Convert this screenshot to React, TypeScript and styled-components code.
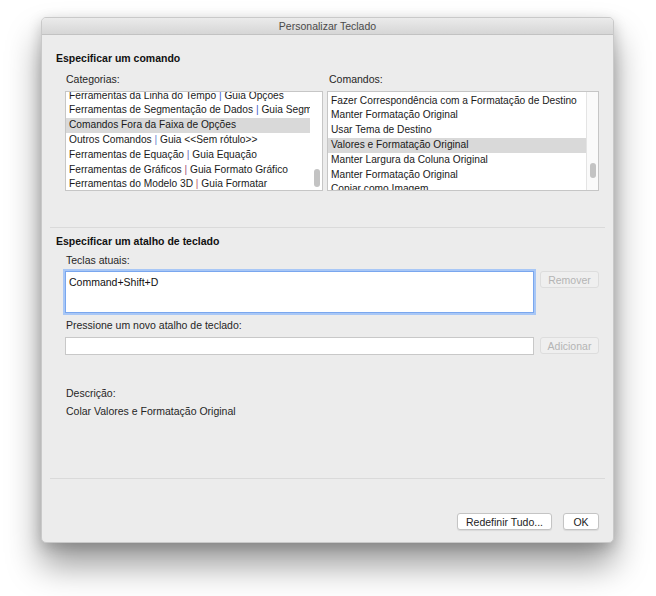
import * as React from 'react';
import styled, { createGlobalStyle } from 'styled-components';

const GlobalStyle = createGlobalStyle`
  html, body {
    margin: 0;
    padding: 0;
    background: #ffffff;
  }
  body {
    font-family: "Liberation Sans", Arial, Helvetica, sans-serif;
    font-size: 10.5px;
    color: #1f1f1f;
  }
`;

type Row = { name: string; guide?: string; pipe?: string; selected?: boolean };

const categorias: Row[] = [
    { name: 'Ferramentas da Linha do Tempo', guide: 'Guia Opções', pipe: '#3f5fc8' },
    { name: 'Ferramentas de Segmentação de Dados', guide: 'Guia Segmentação', pipe: '#3f5fc8' },
    { name: 'Comandos Fora da Faixa de Opções', selected: true },
    { name: 'Outros Comandos', guide: 'Guia <<Sem rótulo>>', pipe: '#6a7fd0' },
    { name: 'Ferramentas de Equação', guide: 'Guia Equação', pipe: '#6a6fb8' },
    { name: 'Ferramentas de Gráficos', guide: 'Guia Formato Gráfico', pipe: '#a0507a' },
    { name: 'Ferramentas do Modelo 3D', guide: 'Guia Formatar', pipe: '#c05a6a' },
];

const comandos: Row[] = [
    { name: 'Fazer Correspondência com a Formatação de Destino' },
    { name: 'Manter Formatação Original' },
    { name: 'Usar Tema de Destino' },
    { name: 'Valores e Formatação Original', selected: true },
    { name: 'Manter Largura da Coluna Original' },
    { name: 'Manter Formatação Original' },
    { name: 'Copiar como Imagem' },
];

class App extends React.Component {
    renderList(rows: Row[], offset: number, thumbTop: number, thumbHeight: number, bordered: boolean) {
        return <ListBox>
            <Rows $offset={offset}>
                {rows.map((r, i) => (
                    <ListRow key={i} $selected={!!r.selected}>
                        {r.name}
                        {r.guide && <> <Pipe $color={r.pipe || '#3f5fc8'}>|</Pipe> {r.guide}</>}
                    </ListRow>
                ))}
            </Rows>
            <Track $bordered={bordered}>
                <Thumb $top={thumbTop} $height={thumbHeight} />
            </Track>
        </ListBox>;
    }

    render() {
        return <Page>
            <GlobalStyle />
            <Window>
                <TitleBar>Personalizar Teclado</TitleBar>
                <Body>
                    <Heading $top={16}>Especificar um comando</Heading>
                    <Indent>
                        <ListsGrid>
                            <div>
                                <FieldLabel $top={7} $left={1}>Categorias:</FieldLabel>
                                {this.renderList(categorias, -3.4, 77, 18, false)}
                            </div>
                            <div>
                                <FieldLabel $top={7} $left={2}>Comandos:</FieldLabel>
                                {this.renderList(comandos, 1.6, 71, 15, true)}
                            </div>
                        </ListsGrid>
                    </Indent>
                </Body>

                <Divider $top={36} />

                <Body>
                    <Heading $top={6}>Especificar um atalho de teclado</Heading>
                    <Indent>
                        <FieldLabel $top={5} $left={1}>Teclas atuais:</FieldLabel>
                        <FieldRow $top={3}>
                            <KeysArea>Command+Shift+D</KeysArea>
                            <PushButton $disabled $nudge={1}>Remover</PushButton>
                        </FieldRow>
                        <FieldLabel $top={5} $left={1}>Pressione um novo atalho de teclado:</FieldLabel>
                        <FieldRow $top={5}>
                            <ShortcutInput />
                            <PushButton $disabled>Adicionar</PushButton>
                        </FieldRow>
                        <FieldLabel $top={31} $left={1}>Descrição:</FieldLabel>
                        <FieldLabel $top={4} $left={1}>Colar Valores e Formatação Original</FieldLabel>
                    </Indent>
                </Body>

                <Divider $top={60} />

                <Footer>
                    <PushButton $width={95}>Redefinir Tudo...</PushButton>
                    <PushButton $width={36}>OK</PushButton>
                </Footer>
            </Window>
        </Page>;
    }
}

const Page = styled.div`
    padding: 17px 0 0 41px;
    min-height: 596px;
    box-sizing: border-box;
`;

const Window = styled.div`
    width: 573px;
    height: 526px;
    box-sizing: border-box;
    background: #ececec;
    border-radius: 5px;
    border: 1px solid #c9c9c9;
    box-shadow: 0 22px 34px rgba(0, 0, 0, 0.4), 0 4px 14px rgba(0, 0, 0, 0.18);
    overflow: hidden;
    display: flex;
    flex-direction: column;
`;

const TitleBar = styled.div`
    height: 16px;
    line-height: 16px;
    text-align: center;
    font-size: 10.5px;
    color: #4a4a4a;
    background: linear-gradient(#ebebeb, #d6d6d6);
    border-bottom: 1px solid #c2c2c2;
    flex-shrink: 0;
`;

const Body = styled.div`
    padding: 0 14px 0 14px;
`;

const Heading = styled.div<{ $top: number }>`
    margin-top: ${p => p.$top}px;
    height: 14px;
    line-height: 14px;
    font-weight: bold;
    font-size: 10.5px;
    color: #111;
`;

const Indent = styled.div`
    padding-left: 9px;
`;

const FieldLabel = styled.div<{ $top: number; $left: number }>`
    margin-top: ${p => p.$top}px;
    padding-left: ${p => p.$left}px;
    height: 14px;
    line-height: 14px;
    color: #262626;
    white-space: nowrap;
`;

const ListsGrid = styled.div`
    display: grid;
    grid-template-columns: 258px 272px;
    column-gap: 4px;
`;

const ListBox = styled.div`
    margin-top: 5px;
    height: 100px;
    box-sizing: border-box;
    background: #fff;
    border: 1px solid #c6c6c6;
    display: flex;
    overflow: hidden;
`;

const Rows = styled.div<{ $offset: number }>`
    flex: 1;
    min-width: 0;
    padding-top: ${p => Math.max(p.$offset, 0)}px;
    margin-top: ${p => Math.min(p.$offset, 0)}px;
`;

const ListRow = styled.div<{ $selected: boolean }>`
    height: 14.8px;
    line-height: 14.8px;
    padding-left: 3px;
    font-size: 10.2px;
    white-space: nowrap;
    overflow: hidden;
    color: #1a1a1a;
    background: ${p => (p.$selected ? '#d9d9d9' : 'transparent')};
`;

const Pipe = styled.span<{ $color: string }>`
    color: ${p => p.$color};
`;

const Track = styled.div<{ $bordered: boolean }>`
    width: 11px;
    flex-shrink: 0;
    background: ${p => (p.$bordered ? '#fafafa' : '#fff')};
    border-left: 1px solid ${p => (p.$bordered ? '#e4e4e4' : 'transparent')};
    display: flex;
    justify-content: center;
`;

const Thumb = styled.div<{ $top: number; $height: number }>`
    width: 6px;
    height: ${p => p.$height}px;
    margin-top: ${p => p.$top}px;
    border-radius: 3px;
    background: #c3c3c3;
`;

const Divider = styled.div<{ $top: number }>`
    margin: ${p => p.$top}px 8px 0 8px;
    height: 1px;
    background: #dadada;
    flex-shrink: 0;
`;

const FieldRow = styled.div<{ $top: number }>`
    margin-top: ${p => p.$top}px;
    display: grid;
    grid-template-columns: 469px 59px;
    column-gap: 6px;
    align-items: start;
`;

const KeysArea = styled.div`
    box-sizing: border-box;
    background: #fff;
    border: 1px solid #7aa7ee;
    box-shadow: 0 0 0 2px #a8c7f6;
    margin-top: 1px;
    height: 42px;
    padding: 4px 3px;
    line-height: 12px;
    color: #111;
`;

const ShortcutInput = styled.div`
    height: 18px;
    box-sizing: border-box;
    background: #fff;
    border: 1px solid #c8c8c8;
`;

const PushButton = styled.div<{ $disabled?: boolean; $width?: number; $nudge?: number }>`
    width: ${p => (p.$width ? `${p.$width}px` : 'auto')};
    height: 17px;
    margin-top: ${p => p.$nudge || 0}px;
    box-sizing: border-box;
    display: flex;
    align-items: center;
    justify-content: center;
    border-radius: 3px;
    white-space: nowrap;
    background: ${p => (p.$disabled ? '#efefef' : '#ffffff')};
    border: 1px solid ${p => (p.$disabled ? '#dddddd' : '#c4c4c4')};
    color: ${p => (p.$disabled ? '#b4b4b4' : '#222')};
    box-shadow: ${p => (p.$disabled ? 'none' : '0 1px 1px rgba(0,0,0,0.08)')};
`;

const Footer = styled.div`
    margin-top: 34px;
    padding-right: 14px;
    display: flex;
    justify-content: flex-end;
    gap: 11px;
`;

export default App;
